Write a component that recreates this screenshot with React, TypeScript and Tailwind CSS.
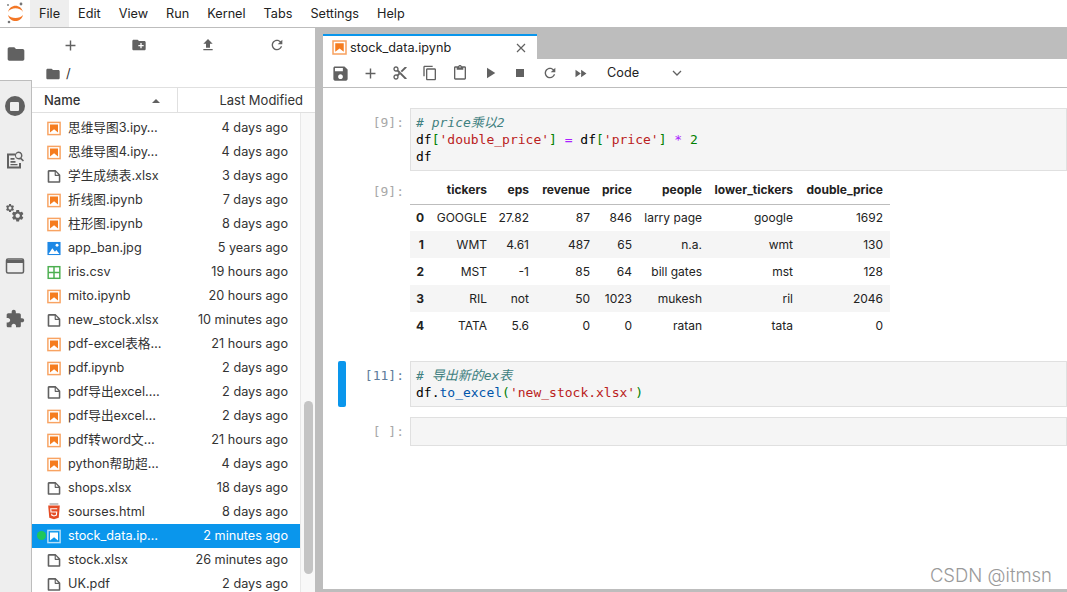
const UI_FONT = "font-['Inter','Noto_Sans_CJK_SC',sans-serif]";

type Kind = "nb" | "file" | "img" | "csv" | "html";

const files: { name: string; time: string; kind: Kind; active?: boolean }[] = [
  { name: "思维导图3.ipy…", time: "4 days ago", kind: "nb" },
  { name: "思维导图4.ipy…", time: "4 days ago", kind: "nb" },
  { name: "学生成绩表.xlsx", time: "3 days ago", kind: "file" },
  { name: "折线图.ipynb", time: "7 days ago", kind: "nb" },
  { name: "柱形图.ipynb", time: "8 days ago", kind: "nb" },
  { name: "app_ban.jpg", time: "5 years ago", kind: "img" },
  { name: "iris.csv", time: "19 hours ago", kind: "csv" },
  { name: "mito.ipynb", time: "20 hours ago", kind: "nb" },
  { name: "new_stock.xlsx", time: "10 minutes ago", kind: "file" },
  { name: "pdf-excel表格…", time: "21 hours ago", kind: "nb" },
  { name: "pdf.ipynb", time: "2 days ago", kind: "nb" },
  { name: "pdf导出excel.…", time: "2 days ago", kind: "file" },
  { name: "pdf导出excel…", time: "2 days ago", kind: "nb" },
  { name: "pdf转word文…", time: "21 hours ago", kind: "nb" },
  { name: "python帮助超…", time: "4 days ago", kind: "nb" },
  { name: "shops.xlsx", time: "18 days ago", kind: "file" },
  { name: "sourses.html", time: "8 days ago", kind: "html" },
  { name: "stock_data.ip…", time: "2 minutes ago", kind: "nb", active: true },
  { name: "stock.xlsx", time: "26 minutes ago", kind: "file" },
  { name: "UK.pdf", time: "2 days ago", kind: "file" },
];

const menus = ["File", "Edit", "View", "Run", "Kernel", "Tabs", "Settings", "Help"];

const tableHead = ["", "tickers", "eps", "revenue", "price", "people", "lower_tickers", "double_price"];
const tableRows = [
  ["0", "GOOGLE", "27.82", "87", "846", "larry page", "google", "1692"],
  ["1", "WMT", "4.61", "487", "65", "n.a.", "wmt", "130"],
  ["2", "MST", "-1", "85", "64", "bill gates", "mst", "128"],
  ["3", "RIL", "not", "50", "1023", "mukesh", "ril", "2046"],
  ["4", "TATA", "5.6", "0", "0", "ratan", "tata", "0"],
];

function Md({ d, size = 16, className = "text-[#616161]" }: { d: string; size?: number; className?: string }) {
  return (
    <svg width={size} height={size} viewBox="0 0 24 24" className={className} fill="currentColor">
      <path d={d} />
    </svg>
  );
}

const FOLDER = "M10 4H4c-1.1 0-2 .9-2 2v12c0 1.1.9 2 2 2h16c1.1 0 2-.9 2-2V8c0-1.1-.9-2-2-2h-8l-2-2z";
const NEW_FOLDER = "M20 6h-8l-2-2H4c-1.1 0-2 .9-2 2v12c0 1.1.9 2 2 2h16c1.1 0 2-.9 2-2V8c0-1.1-.9-2-2-2zm-1 8h-3v3h-2v-3h-3v-2h3V9h2v3h3v2z";
const UPLOAD = "M9 16h6v-6h4l-7-7-7 7h4zm-4 2h14v2H5z";
const REFRESH = "M17.65 6.35C16.2 4.9 14.21 4 12 4c-4.42 0-7.99 3.58-7.99 8s3.57 8 7.99 8c3.73 0 6.84-2.55 7.73-6h-2.08c-.82 2.33-3.04 4-5.65 4-3.31 0-6-2.69-6-6s2.69-6 6-6c1.66 0 3.14.69 4.22 1.78L13 11h7V4l-2.35 2.35z";
const ADD = "M19 13h-6v6h-2v-6H5v-2h6V5h2v6h6v2z";
const SAVE = "M17 3H5c-1.11 0-2 .9-2 2v14c0 1.1.89 2 2 2h14c1.1 0 2-.9 2-2V7l-4-4zm-5 16c-1.66 0-3-1.34-3-3s1.34-3 3-3 3 1.34 3 3-1.34 3-3 3zm3-10H5V5h10v4z";
const CUT = "M9.64 7.64c.23-.5.36-1.05.36-1.64 0-2.21-1.79-4-4-4S2 3.79 2 6s1.79 4 4 4c.59 0 1.14-.13 1.64-.36L10 12l-2.36 2.36C7.14 14.13 6.59 14 6 14c-2.21 0-4 1.79-4 4s1.79 4 4 4 4-1.79 4-4c0-.59-.13-1.14-.36-1.64L12 14l7 7h3v-1L9.64 7.64zM6 8c-1.1 0-2-.89-2-2s.9-2 2-2 2 .89 2 2-.9 2-2 2zm0 12c-1.1 0-2-.89-2-2s.9-2 2-2 2 .89 2 2-.9 2-2 2zm6-7.5c-.28 0-.5-.22-.5-.5s.22-.5.5-.5.5.22.5.5-.22.5-.5.5zM19 3l-6 6 2 2 7-7V3z";
const COPY = "M16 1H4c-1.1 0-2 .9-2 2v14h2V3h12V1zm3 4H8c-1.1 0-2 .9-2 2v14c0 1.1.9 2 2 2h11c1.1 0 2-.9 2-2V7c0-1.1-.9-2-2-2zm0 16H8V7h11v14z";
const PASTE = "M19 2h-4.18C14.4.84 13.3 0 12 0c-1.3 0-2.4.84-2.82 2H5c-1.1 0-2 .9-2 2v16c0 1.1.9 2 2 2h14c1.1 0 2-.9 2-2V4c0-1.1-.9-2-2-2zm-7 0c.55 0 1 .45 1 1s-.45 1-1 1-1-.45-1-1 .45-1 1-1zm7 18H5V4h2v3h10V4h2v16z";
const PLAY = "M8 5v14l11-7z";
const STOP = "M6 6h12v12H6z";
const FAST = "M4 18l8.5-6L4 6v12zm9-12v12l8.5-6L13 6z";
const EXTENSION = "M20.5 11H19V7c0-1.1-.9-2-2-2h-4V3.5C13 2.12 11.88 1 10.5 1S8 2.12 8 3.5V5H4c-1.1 0-1.99.9-1.99 2v3.8H3.5c1.49 0 2.7 1.21 2.7 2.7s-1.21 2.7-2.7 2.7H2V20c0 1.1.9 2 2 2h3.8v-1.5c0-1.49 1.21-2.7 2.7-2.7 1.49 0 2.7 1.21 2.7 2.7V22H17c1.1 0 2-.9 2-2v-4h1.5c1.38 0 2.5-1.12 2.5-2.5S21.88 11 20.5 11z";
const GEAR = "M19.14 12.94c.04-.3.06-.61.06-.94 0-.32-.02-.64-.07-.94l2.03-1.58c.18-.14.23-.41.12-.61l-1.92-3.32c-.12-.22-.37-.29-.59-.22l-2.39.96c-.5-.38-1.03-.7-1.62-.94l-.36-2.54c-.04-.24-.24-.41-.48-.41h-3.84c-.24 0-.43.17-.47.41l-.36 2.54c-.59.24-1.13.57-1.62.94l-2.39-.96c-.22-.08-.47 0-.59.22L2.74 8.87c-.12.21-.08.47.12.61l2.03 1.58c-.05.3-.09.63-.09.94s.02.64.07.94l-2.03 1.58c-.18.14-.23.41-.12.61l1.92 3.32c.12.22.37.29.59.22l2.39-.96c.5.38 1.03.7 1.62.94l.36 2.54c.05.24.24.41.48.41h3.84c.24 0 .44-.17.47-.41l.36-2.54c.59-.24 1.13-.56 1.62-.94l2.39.96c.22.08.47 0 .59-.22l1.92-3.32c.12-.22.07-.47-.12-.61l-2.01-1.58zM12 15.600c-1.980 0-3.600-1.620-3.600-3.600s1.620-3.600 3.600-3.600 3.600 1.620 3.600 3.600-1.620 3.600-3.600 3.600z";

function NotebookIcon({ white }: { white?: boolean }) {
  const color = white ? "#ffffff" : "#f57c1f";
  return (
    <svg width="17" height="17" viewBox="0 0 22 22">
      <rect x="2.600" y="2.600" width="16.800" height="16.800" fill="none" stroke={color} strokeWidth="2" opacity="0.7" />
      <path d="M16.500 16.500l-5.400-4.300-5.600 4.300v-11h11z" fill={color} />
    </svg>
  );
}

function FileIcon() {
  return (
    <svg width="17" height="17" viewBox="0 0 22 22" fill="#616161">
      <path d="M19.3 8.2l-5.500-5.500c-.3-.3-.7-.5-1.200-.5H3.900c-.8.1-1.600.9-1.600 1.800v14.100c0 .9.7 1.600 1.600 1.600h14.200c.9 0 1.600-.7 1.600-1.600V9.400c.1-.5-.1-.9-.4-1.200zm-5.800-3.300l3.400 3.600h-3.400V5zm3.900 12.700H4.700c-.1 0-.2 0-.2-.2V4.700c0-.2.1-.3.2-.3h7.200v4.400s0 .8.3 1.100c.3.3 1.100.3 1.100.3h4.300v7.200s-.1.2-.2.2z" />
    </svg>
  );
}

function ImageIcon() {
  return (
    <svg width="17" height="17" viewBox="0 0 22 22">
      <rect x="2" y="2" width="18" height="18" fill="#1e88e5" />
      <circle cx="15.200" cy="6.600" r="2" fill="#ffffff" />
      <path d="M3.500 18.500l5.200-8 3.600 5 2-2.400 4.200 5.400z" fill="#ffffff" />
    </svg>
  );
}

function CsvIcon() {
  return (
    <svg width="17" height="17" viewBox="0 0 22 22" fill="none" stroke="#4caf50" strokeWidth="2">
      <rect x="3" y="3" width="16" height="16" />
      <path d="M11 3v16M3 11h16" />
    </svg>
  );
}

function HtmlIcon() {
  return (
    <svg width="16" height="18" viewBox="0 0 22 24">
      <path d="M3 3h16l-1.500 17L11 22l-6.500-2z" fill="#e44d26" />
      <path d="M15.500 7.500h-9l.4 4.500h7.800l-.4 4.300L11 17.400l-3-1.100-.2-1.900" fill="none" stroke="#ffffff" strokeWidth="1.500" />
      <path d="M5 1h12" stroke="#777777" strokeWidth="1.200" />
    </svg>
  );
}

function RowIcon({ kind, white }: { kind: Kind; white?: boolean }) {
  if (kind === "nb") return <NotebookIcon white={white} />;
  if (kind === "img") return <ImageIcon />;
  if (kind === "csv") return <CsvIcon />;
  if (kind === "html") return <HtmlIcon />;
  return <FileIcon />;
}

function JupyterLogo() {
  return (
    <svg width="22" height="24" viewBox="0 0 22 24">
      <path d="M4 10C6 1.500 17 1.500 19 10C16 5 7 5 4 10z" fill="#f37726" />
      <path d="M4 13C6 21 17 21 19 13C16 17 7 17 4 13z" fill="#f37726" />
      <circle cx="17" cy="2" r="1.400" fill="#767677" />
      <circle cx="4" cy="3" r="0.900" fill="#767677" />
      <circle cx="5" cy="20" r="1.300" fill="#767677" />
    </svg>
  );
}

function PropertyIcon() {
  return (
    <svg width="20" height="20" viewBox="0 0 20 20" fill="#616161">
      <path d="M2 3.500h8.500v2H4v11h10V13h2v5.500H2z" />
      <path d="M5.500 8h4v1.700h-4zM5.500 11h5v1.700h-5zM5.500 14h7v1.300h-7z" />
      <path fillRule="evenodd" d="M13.500 1.500a4 4 0 0 1 3.100 6.500l2.400 2.500-1.100 1.100-2.500-2.400a4 4 0 1 1-1.900-7.700zm0 1.500a2.500 2.500 0 1 0 0 5 2.500 2.500 0 0 0 0-5z" />
    </svg>
  );
}

function CogsIcon() {
  return (
    <svg width="20" height="20" viewBox="0 0 20 20" fill="#616161">
      <g transform="translate(0 0) scale(0.42)"><path d={GEAR} /></g>
      <g transform="translate(5.500 5.500) scale(0.6)"><path d={GEAR} /></g>
    </svg>
  );
}

function TabsIcon() {
  return (
    <svg width="20" height="20" viewBox="0 0 20 20" fill="none" stroke="#616161" strokeWidth="1.500">
      <rect x="1.500" y="3" width="17" height="14" rx="1.500" />
      <path d="M1.500 5.500h17" strokeWidth="3" />
    </svg>
  );
}

function Sidebar() {
  return (
    <aside className="w-[32px] shrink-0 flex flex-col bg-[#eeeeee]">
      <div className="h-[52px] w-[32px] bg-white flex items-center justify-center">
        <Md d={FOLDER} size={20} />
      </div>
      <div className="flex-1 border-r border-t border-[#bdbdbd] flex flex-col items-center pr-[2px]">
        <div className="mt-[15px] w-[20px] h-[20px] rounded-full bg-[#616161] flex items-center justify-center">
          <div className="w-[9px] h-[9px] bg-[#eeeeee] rounded-[1px]" />
        </div>
        <div className="mt-[34px]"><PropertyIcon /></div>
        <div className="mt-[33px]"><CogsIcon /></div>
        <div className="mt-[33px]"><TabsIcon /></div>
        <div className="mt-[33px]"><Md d={EXTENSION} size={20} /></div>
      </div>
    </aside>
  );
}

function FileRow({ name, time, kind, active }: { name: string; time: string; kind: Kind; active?: boolean }) {
  return (
    <div className={`relative h-[24px] shrink-0 flex items-center pl-[14px] pr-[12px] text-[12.7px] ${active ? "bg-[#0a96ec] text-white" : "text-[#333333]"}`}>
      {active && <span className="absolute left-[5px] top-[7px] w-[9px] h-[9px] rounded-full bg-[#1fc75a]" />}
      <span className="w-[16px] flex justify-center"><RowIcon kind={kind} white={active} /></span>
      <span className="ml-[6px] flex-1 whitespace-nowrap">{name}</span>
      <span className="whitespace-nowrap">{time}</span>
    </div>
  );
}

function FilePanel() {
  const tools = [
    { d: ADD, size: 17 },
    { d: NEW_FOLDER, size: 16 },
    { d: UPLOAD, size: 16 },
    { d: REFRESH, size: 16 },
  ];
  return (
    <section className="w-[283px] shrink-0 flex flex-col bg-white overflow-hidden">
      <div className="h-[34px] shrink-0 px-[4px] flex items-center">
        {tools.map((t) => (
          <div key={t.d} className="flex-1 flex justify-center"><Md d={t.d} size={t.size} /></div>
        ))}
      </div>
      <div className="h-[25px] shrink-0 flex items-center pl-[13px] pb-[2px] text-[13px] text-[#333333]">
        <Md d={FOLDER} size={16} />
        <span className="ml-[5px]">/</span>
      </div>
      <div className="h-[26px] shrink-0 border-y border-[#e0e0e0] flex items-center text-[13px] text-[#333333]">
        <div className="w-[146px] h-full border-r border-[#e0e0e0] pl-[12px] pt-[1px] flex items-center justify-between pr-[17px] font-medium">
          <span>Name</span>
          <span className="w-0 h-0 border-x-[4px] border-x-transparent border-b-[4px] border-b-[#616161]" />
        </div>
        <div className="flex-1 text-right pr-[12px] pt-[1px]">Last Modified</div>
      </div>
      <div className="flex-1 min-h-0 flex overflow-hidden">
        <div className="w-[269px] shrink-0 pt-[3px] flex flex-col border-r border-[#e8e8e8]">
          {files.map((f) => (
            <FileRow key={f.name} {...f} />
          ))}
        </div>
        <div className="flex-1 pl-[3px] pt-[288px] bg-[#f8f8f8]">
          <div className="w-[9px] h-[173px] rounded-full bg-[#c4c4c4]" />
        </div>
      </div>
    </section>
  );
}

function NotebookToolbar() {
  const icons = [
    { d: SAVE, size: 19 },
    { d: ADD, size: 17 },
    { d: CUT, size: 16 },
    { d: COPY, size: 16 },
    { d: PASTE, size: 16 },
    { d: PLAY, size: 18 },
    { d: STOP, size: 16 },
    { d: REFRESH, size: 16 },
    { d: FAST, size: 15 },
  ];
  return (
    <div className="h-[29px] shrink-0 bg-white border-b border-[#bdbdbd] flex items-center pl-[2px]">
      {icons.map((t) => (
        <div key={t.d} className="w-[30px] flex justify-center"><Md d={t.d} size={t.size} /></div>
      ))}
      <span className="ml-[12px] text-[12.7px] text-[#222222]">Code</span>
      <svg width="12" height="12" viewBox="0 0 12 12" className="ml-[32px]" fill="none" stroke="#616161" strokeWidth="1.300">
        <path d="M2 4l4 4 4-4" />
      </svg>
    </div>
  );
}

function Prompt({ text, color = "text-[#a8a8a8]", width = "w-[72px]" }: { text: string; color?: string; width?: string }) {
  return (
    <div className={`${width} shrink-0 text-right pr-[6px] pt-[6px] ${color}`}>
      {text}
    </div>
  );
}

function DataTable() {
  const widths = ["w-[20px]", "w-[64px]", "w-[42px]", "w-[61px]", "w-[42px]", "w-[70px]", "w-[91px]", "w-[90px]"];
  return (
    <table className="table-fixed w-[480px] border-collapse text-[12px] text-[#222222]">
      <colgroup>
        {widths.map((w, i) => <col key={i} className={w} />)}
      </colgroup>
      <thead>
        <tr className="h-[27px] border-b border-[#bdbdbd]">
          {tableHead.map((h, i) => (
            <th key={i} className="pr-[7px] pb-[2px] text-right font-bold whitespace-nowrap">{h}</th>
          ))}
        </tr>
      </thead>
      <tbody>
        {tableRows.map((row, r) => (
          <tr key={r} className={`h-[27px] ${r % 2 === 1 ? "bg-[#f5f5f5]" : ""}`}>
            {row.map((c, i) => (
              <td key={i} className={`text-right whitespace-nowrap ${i === 0 ? "font-bold pr-[6px]" : "pr-[7px]"}`}>{c}</td>
            ))}
          </tr>
        ))}
      </tbody>
    </table>
  );
}

function Notebook() {
  return (
    <div className="flex-1 min-h-0 relative overflow-hidden bg-white font-['DejaVu_Sans_Mono','Noto_Sans_CJK_SC',monospace] text-[13px] leading-[17px]">
      <div className="pt-[20px] pl-[15px] flex flex-col">
        <div className="flex">
          <Prompt text="[9]:" />
          <div className="flex-1 h-[63px] border border-[#e0e0e0] bg-[#f5f5f5] px-[5px] pt-[5px] text-black">
            <div className="italic text-[#408080]"># price乘以2</div>
            <div className="whitespace-nowrap">
              df<span className="text-[#008000]">[</span><span className="text-[#ba2121]">'double_price'</span><span className="text-[#008000]">]</span> <span className="text-[#aa22ff]">=</span> df<span className="text-[#008000]">[</span><span className="text-[#ba2121]">'price'</span><span className="text-[#008000]">]</span> <span className="text-[#aa22ff]">*</span> <span className="text-[#008000]">2</span>
            </div>
            <div>df</div>
          </div>
        </div>
        <div className="flex mt-[6px]">
          <Prompt text="[9]:" />
          <div className={UI_FONT}><DataTable /></div>
        </div>
        <div className="flex mt-[22px]">
          <div className="w-[8px] h-[46px] rounded-[2px] bg-[#0a96ec] shrink-0" />
          <Prompt text="[11]:" color="text-[#607d9b]" width="w-[64px]" />
          <div className="flex-1 h-[46px] border border-[#e0e0e0] bg-[#f5f5f5] px-[5px] pt-[5px]">
            <div className="italic text-[#408080]"># 导出新的ex表</div>
            <div className="whitespace-nowrap">
              df.<span className="text-[#0055aa]">to_excel</span><span className="text-[#008000]">(</span><span className="text-[#ba2121]">'new_stock.xlsx'</span><span className="text-[#008000]">)</span>
            </div>
          </div>
        </div>
        <div className="flex mt-[10px]">
          <Prompt text="[ ]:" />
          <div className="flex-1 h-[29px] border border-[#e0e0e0] bg-[#f5f5f5]" />
        </div>
      </div>
      <span className={`absolute right-[15px] bottom-[2px] text-[18.500px] leading-[24px] text-[#9a9a9a] ${UI_FONT} font-light`}>CSDN @itmsn</span>
    </div>
  );
}

export default function App() {
  return (
    <div className={`w-[1067px] h-[592px] overflow-hidden flex flex-col bg-white ${UI_FONT}`}>
      <header className="h-[28px] shrink-0 flex items-stretch border-b border-[#bdbdbd] bg-white">
        <div className="w-[30px] flex items-center justify-center"><JupyterLogo /></div>
        {menus.map((m, i) => (
          <div key={m} className={`px-[9px] pt-[1px] flex items-center text-[12.7px] text-[#222222] ${i === 0 ? "bg-[#eeeeee]" : ""}`}>
            {m}
          </div>
        ))}
      </header>
      <div className="flex-1 min-h-0 flex">
        <Sidebar />
        <FilePanel />
        <div className="w-[8px] shrink-0 bg-[#bdbdbd]" />
        <main className="flex-1 min-w-0 flex flex-col bg-[#bdbdbd] pb-[3px]">
          <div className="h-[31px] shrink-0 flex items-end">
            <div className="w-[214px] h-[25px] bg-white border-t-[2px] border-[#0a96ec] flex items-center pl-[8px] pr-[10px] text-[12.7px] text-[#222222]">
              <NotebookIcon />
              <span className="ml-[2px] flex-1">stock_data.ipynb</span>
              <svg width="12" height="12" viewBox="0 0 12 12" fill="none" stroke="#616161" strokeWidth="1.200">
                <path d="M2 2l8 8M10 2l-8 8" />
              </svg>
            </div>
          </div>
          <NotebookToolbar />
          <Notebook />
        </main>
      </div>
    </div>
  );
}
